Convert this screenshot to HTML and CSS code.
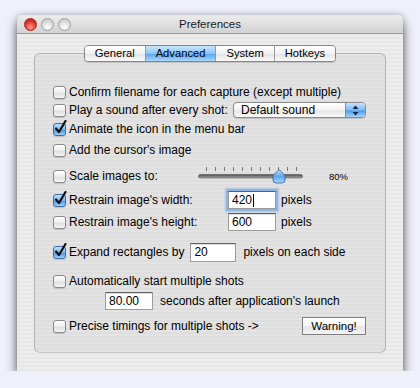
FILE: index.html
```html
<!DOCTYPE html>
<html lang="en">
<head>
    <meta charset="UTF-8">
    <title>Preferences</title>
    <link rel="stylesheet" href="styles.css">
</head>
<body>

    <div class="window">
        <div class="titlebar">
            <div class="lights">
                <span class="light close"></span>
                <span class="light"></span>
                <span class="light"></span>
            </div>
            <div class="title">Preferences</div>
            <div></div>
        </div>

        <div class="content">
            <div class="tabs">
                <span class="tab">General</span>
                <span class="tab active">Advanced</span>
                <span class="tab">System</span>
                <span class="tab">Hotkeys</span>
            </div>

            <div class="group">
                <div class="row">
                    <span class="check"></span>
                    <span>Confirm filename for each capture (except multiple)</span>
                </div>
                <div class="row">
                    <span class="check"></span>
                    <span>Play a sound after every shot:</span>
                    <div class="popup">
                        <span class="popup-text">Default sound</span>
                        <span class="popup-arrows">
                            <svg width="7" height="11" viewBox="0 0 7 11">
                                <path d="M3.5 0.5 L6.5 4 L0.5 4 Z" fill="#10284e"/>
                                <path d="M3.5 10.5 L6.5 7 L0.5 7 Z" fill="#10284e"/>
                            </svg>
                        </span>
                    </div>
                </div>
                <div class="row sp1">
                    <span class="check on">
                        <svg width="14" height="15" viewBox="0 0 14 15"><path d="M3 8.5 L6 12 L12.5 1" fill="none" stroke="#111" stroke-width="2.2" stroke-linecap="round" stroke-linejoin="round"/></svg>
                    </span>
                    <span>Animate the icon in the menu bar</span>
                </div>
                <div class="row sp3">
                    <span class="check"></span>
                    <span>Add the cursor's image</span>
                </div>
                <div class="row tall sp7">
                    <span class="check"></span>
                    <span class="label-scale">Scale images to:</span>
                    <svg class="slider" width="105" height="20" viewBox="0 0 105 20">
                        <defs>
                            <linearGradient id="trk" x1="0" y1="0" x2="0" y2="1">
                                <stop offset="0" stop-color="#4a4a4a"/>
                                <stop offset="1" stop-color="#a8a8a8"/>
                            </linearGradient>
                            <linearGradient id="thumb" x1="0" y1="0" x2="0" y2="1">
                                <stop offset="0" stop-color="#c9e4fb"/>
                                <stop offset="0.5" stop-color="#5aa6ec"/>
                                <stop offset="1" stop-color="#a8d6fb"/>
                            </linearGradient>
                        </defs>
                        <g stroke="#777" stroke-width="1">
                            <line x1="8.5" y1="1" x2="8.5" y2="5"/>
                            <line x1="17.5" y1="1" x2="17.5" y2="5"/>
                            <line x1="26.5" y1="1" x2="26.5" y2="5"/>
                            <line x1="35.5" y1="1" x2="35.5" y2="5"/>
                            <line x1="44.5" y1="1" x2="44.5" y2="5"/>
                            <line x1="53.5" y1="1" x2="53.5" y2="5"/>
                            <line x1="62.5" y1="1" x2="62.5" y2="5"/>
                            <line x1="71.5" y1="1" x2="71.5" y2="5"/>
                            <line x1="80.5" y1="1" x2="80.5" y2="5"/>
                            <line x1="89.5" y1="1" x2="89.5" y2="5"/>
                            <line x1="98.5" y1="1" x2="98.5" y2="5"/>
                        </g>
                        <rect x="0.5" y="8.5" width="104" height="3.5" rx="1.75" fill="url(#trk)" stroke="#555" stroke-width="0.6"/>
                        <path d="M81 3.5 L87 9.5 L87 14 Q87 17 84 17 L78 17 Q75 17 75 14 L75 9.5 Z" fill="url(#thumb)" stroke="#2d5a92" stroke-width="0.8"/>
                    </svg>
                    <span class="percent">80%</span>
                </div>
                <div class="row sp5">
                    <span class="check on">
                        <svg width="14" height="15" viewBox="0 0 14 15"><path d="M3 8.5 L6 12 L12.5 1" fill="none" stroke="#111" stroke-width="2.2" stroke-linecap="round" stroke-linejoin="round"/></svg>
                    </span>
                    <span class="label-restrain">Restrain image's width:</span>
                    <span class="field focused">420<span class="caret"></span></span>
                    <span class="unit">pixels</span>
                </div>
                <div class="row sp4">
                    <span class="check"></span>
                    <span class="label-restrain">Restrain image's height:</span>
                    <span class="field">600</span>
                    <span class="unit">pixels</span>
                </div>
                <div class="row sp12">
                    <span class="check on">
                        <svg width="14" height="15" viewBox="0 0 14 15"><path d="M3 8.5 L6 12 L12.5 1" fill="none" stroke="#111" stroke-width="2.2" stroke-linecap="round" stroke-linejoin="round"/></svg>
                    </span>
                    <span>Expand rectangles by</span>
                    <span class="field short">20</span>
                    <span class="unit wide">pixels on each side</span>
                </div>
                <div class="row sp11">
                    <span class="check"></span>
                    <span>Automatically start multiple shots</span>
                </div>
                <div class="row sp2">
                    <span class="field indent">80.00</span>
                    <span class="unit wide">seconds after application's launch</span>
                </div>
                <div class="row sp7">
                    <span class="check"></span>
                    <span>Precise timings for multiple shots -&gt;</span>
                    <span class="button">Warning!</span>
                </div>
            </div>
        </div>
    </div>

</body>
</html>
```

FILE: styles.css
```css
body {
    margin: 0;
    padding: 0;
    background-color: #eff0fa;
    font-family: 'Liberation Sans', Arial, sans-serif;
    font-size: 12px;
    color: #000;
}
.window {
    width: 386px;
    height: 356px;
    margin: 15px 0 0 17px;
    border-radius: 5px 5px 0 0;
    background: repeating-linear-gradient(#ededed 0 2px, #e7e7e7 2px 4px);
    box-shadow: 0 7px 12px rgba(0, 0, 0, 0.55), 0 0 6px rgba(0, 0, 0, 0.25);
    display: flex;
    flex-direction: column;
}
.titlebar {
    flex: none;
    height: 18px;
    border-bottom: 1px solid #9a9a9a;
    border-radius: 5px 5px 0 0;
    background: linear-gradient(#ececec, #d2d2d2);
    display: grid;
    grid-template-columns: 1fr auto 1fr;
    align-items: center;
}
.lights {
    display: flex;
    gap: 4px;
    padding-left: 7px;
}
.light {
    width: 11px;
    height: 11px;
    border-radius: 50%;
    border: 1px solid #a0a0a0;
    background: radial-gradient(circle at 50% 75%, #ffffff, #dcdcdc 55%, #bdbdbd);
}
.light.close {
    border-color: #a3221c;
    background: radial-gradient(circle at 50% 75%, #ff9c8c, #e2372b 55%, #b71c14);
}
.title {
    font-size: 11.5px;
    color: #1a1a1a;
}
.content {
    display: flex;
    flex-direction: column;
    padding-top: 11px;
}
.tabs {
    align-self: center;
    display: flex;
    height: 15px;
    border: 1px solid #858585;
    border-radius: 4px;
    position: relative;
    z-index: 1;
    font-size: 11.2px;
    box-shadow: 0 1px 1px rgba(0, 0, 0, 0.15);
    overflow: hidden;
}
.tab {
    padding: 0 10px;
    line-height: 15px;
    background: linear-gradient(#ffffff, #f1f1f1 50%, #e4e4e4 55%, #fafafa);
}
.tab + .tab {
    border-left: 1px solid #9a9a9a;
}
.tab.active {
    background: linear-gradient(#cbe5fb, #8cc5f5 50%, #5aa7ec 55%, #a9d8fc);
}
.group {
    margin: -9px 17px 0;
    height: 300px;
    box-sizing: border-box;
    border: 1px solid #b3b3b3;
    border-bottom-color: #c4c4c4;
    border-radius: 6px;
    background: repeating-linear-gradient(#e3e3e3 0 2px, #dedede 2px 4px);
    padding: 29px 19px 0 18px;
    display: flex;
    flex-direction: column;
}
.row {
    flex: none;
    height: 18px;
    display: flex;
    align-items: center;
    white-space: nowrap;
}
.row.tall {
    height: 20px;
}
.sp1 { margin-top: 1px; }
.sp2 { margin-top: 2px; }
.sp3 { margin-top: 3px; }
.sp4 { margin-top: 4px; }
.sp5 { margin-top: 5px; }
.sp7 { margin-top: 7px; }
.sp11 { margin-top: 11px; }
.sp12 { margin-top: 12px; }
.check {
    width: 11px;
    height: 11px;
    flex: none;
    margin-right: 3px;
    border: 1px solid #8a8a8a;
    border-radius: 3px;
    background: linear-gradient(#ffffff, #ececec 50%, #dedede 55%, #f7f7f7);
    box-shadow: 0 1px 1px rgba(0, 0, 0, 0.15);
    position: relative;
}
.check.on {
    border-color: #3f6ea6;
    background: linear-gradient(#c0e0fa, #7ab8f1 50%, #4a98e4 55%, #9fd0fb);
}
.check svg {
    position: absolute;
    left: -1px;
    top: -4px;
}
.popup {
    margin-left: auto;
    width: 131px;
    height: 14px;
    border: 1px solid #8a8a8a;
    border-radius: 4px;
    background: linear-gradient(#ffffff, #f3f3f3 50%, #e6e6e6 55%, #fafafa);
    box-shadow: 0 1px 1px rgba(0, 0, 0, 0.15);
    display: flex;
    overflow: hidden;
}
.popup-text {
    flex: 1;
    padding-left: 7px;
    line-height: 14px;
}
.popup-arrows {
    width: 19px;
    border-left: 1px solid #6d8fbd;
    background: linear-gradient(#c4e1fb, #80bcf2 50%, #4f9be6 55%, #a3d3fb);
    display: flex;
    align-items: center;
    justify-content: center;
}
.label-scale {
    width: 129px;
}
.label-restrain {
    width: 159px;
}
.slider {
    flex: none;
}
.percent {
    margin-left: 26px;
    font-size: 9.5px;
}
.field {
    width: 43px;
    height: 16px;
    padding-left: 3px;
    border: 1px solid #9b9b9b;
    border-top-color: #5f5f5f;
    background: #fff;
    box-shadow: inset 0 1px 1px rgba(0, 0, 0, 0.15);
    line-height: 16px;
    display: flex;
    align-items: center;
}
.field.focused {
    box-shadow: 0 0 0 2px #8db4e6, 0 0 2px 3px rgba(120, 165, 225, 0.5);
}
.field.short {
    width: 41px;
    height: 17px;
    margin-left: 6px;
}
.field.indent {
    margin-left: 52px;
}
.caret {
    width: 1px;
    height: 13px;
    background: #000;
    margin-left: 1px;
}
.unit {
    margin-left: 5px;
}
.unit.wide {
    margin-left: 7px;
}
.button {
    margin-left: auto;
    width: 62px;
    height: 16px;
    border: 1px solid #7d7d7d;
    background: linear-gradient(#ffffff, #f4f4f4 50%, #e4e4e4 55%, #f5f5f5);
    font-size: 11.5px;
    text-align: center;
    line-height: 16px;
}
```
